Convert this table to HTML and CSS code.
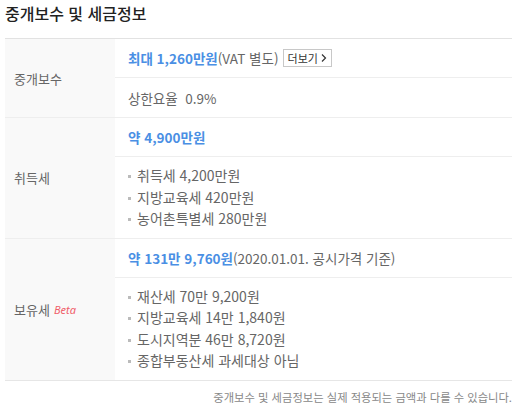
FILE: index.html
```html
<!DOCTYPE html>
<html lang="ko">
<head>
<meta charset="utf-8">
<link rel="stylesheet" href="styles.css">
</head>
<body>
<div class="wrap">
  <h2 class="title">중개보수 및 세금정보</h2>
  <div class="table">
    <div class="row">
      <div class="label">중개보수</div>
      <div class="cells">
        <div class="cell"><span class="em">최대 1,260만원</span><span class="sub">(VAT 별도)</span><button class="more">더보기 <svg width="6" height="8" viewBox="0 0 6 8"><path d="M1 0.5 L4.5 4 L1 7.5" fill="none" stroke="#333" stroke-width="1.2"/></svg></button></div>
        <div class="cell plain">상한요율&nbsp; 0.9%</div>
      </div>
    </div>
    <div class="row">
      <div class="label">취득세</div>
      <div class="cells">
        <div class="cell"><span class="em">약 4,900만원</span></div>
        <ul class="list">
          <li>취득세 4,200만원</li>
          <li>지방교육세 420만원</li>
          <li>농어촌특별세 280만원</li>
        </ul>
      </div>
    </div>
    <div class="row">
      <div class="label">보유세 <span class="beta">Beta</span></div>
      <div class="cells">
        <div class="cell"><span class="em">약 131만 9,760원</span><span class="sub">(2020.01.01. 공시가격 기준)</span></div>
        <ul class="list">
          <li>재산세 70만 9,200원</li>
          <li>지방교육세 14만 1,840원</li>
          <li>도시지역분 46만 8,720원</li>
          <li>종합부동산세 과세대상 아님</li>
        </ul>
      </div>
    </div>
  </div>
  <p class="note">중개보수 및 세금정보는 실제 적용되는 금액과 다를 수 있습니다.</p>
</div>
</body>
</html>
```
FILE: styles.css
```css
* { box-sizing: border-box; }
html, body { margin: 0; padding: 0; background: #fff; }
body { font-family: "Noto Sans CJK KR", "Noto Sans", sans-serif; color: #555; }
.wrap { padding: 0 3px 0 5px; }
.title { margin: 0; padding-top: 2px; height: 38px; font-size: 16px; font-weight: 500; color: #222; line-height: 22px; }
.table { border-top: 1px solid #e2e2e2; border-bottom: 1px solid #e6e6e6; }
.row { display: flex; border-bottom: 1px solid #eee; }
.row:last-child { border-bottom: none; }
.label { width: 110px; flex: none; background: #f9f9f9; display: flex; align-items: center; padding-left: 9px; font-size: 13px; color: #666; }
.beta { font-style: italic; color: #f0606a; font-size: 11px; margin-left: 4px; font-family: "Noto Sans", sans-serif; }
.cells { flex: 1; }
.cell { height: 39px; display: flex; align-items: center; padding-left: 13px; font-size: 13.5px; border-bottom: 1px solid #eee; color: #666; }
.cell.plain { border-bottom: none; height: 39px; }
.em { color: #4a8fe4; font-weight: 700; }
.sub { color: #666; }
.more { margin-left: 4px; height: 18px; padding: 0 4px; border: 1px solid #c8c8c8; background: #fff; font-family: inherit; font-size: 11px; color: #333; display: flex; align-items: center; gap: 3px; line-height: 1; }
.list { list-style: none; margin: 0; padding: 8px 0 8px 13px; font-size: 14px; color: #666; }
.list li { line-height: 21.5px; position: relative; padding-left: 9px; }
.list li::before { content: ""; position: absolute; left: 0; top: 10px; width: 3px; height: 3px; background: #bbb; }
.note { margin: 0; padding-top: 8px; text-align: right; font-size: 11.3px; color: #888; }
```
